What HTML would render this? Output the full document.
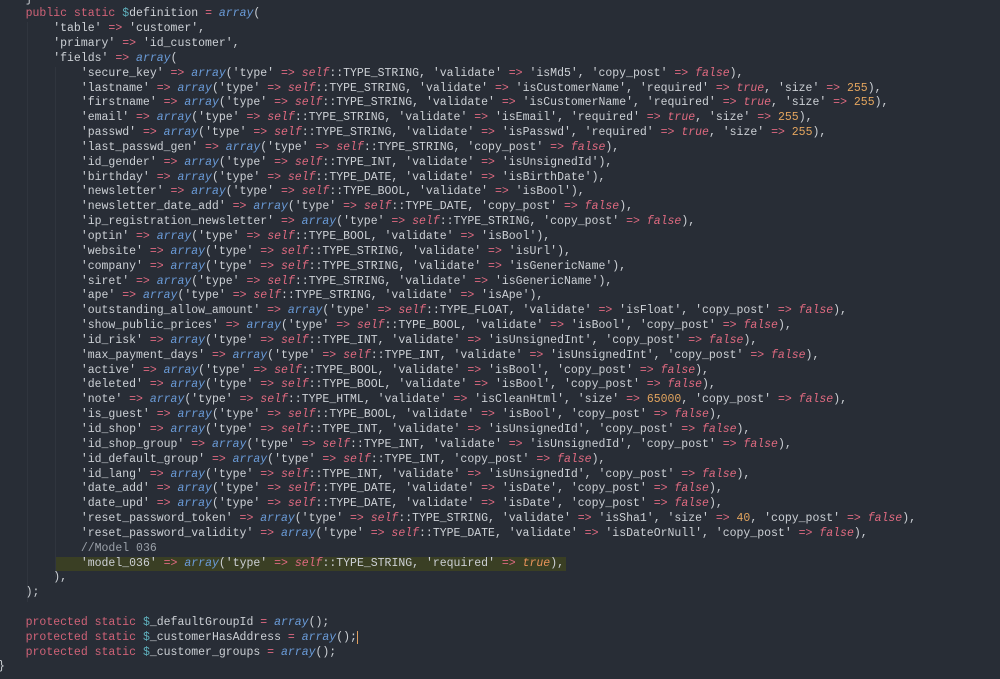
<!DOCTYPE html>
<html><head><meta charset="utf-8"><style>
html,body{margin:0;padding:0;background:#282d36;width:1000px;height:679px;overflow:hidden}
pre{position:absolute;left:-2px;top:-7.5px;margin:0;font-family:"Liberation Mono",monospace;font-size:11.5px;line-height:14.85px;color:#ccd0d5;white-space:pre}
b{font-weight:normal;color:#df6a80}
i{color:#6a9bd8;font-style:italic}
em{color:#df6a80;font-style:italic}
u{text-decoration:none;color:#e2a45e}
.k{color:#cf6277}
.d{color:#5fb0bd}
.c{color:#9aa0a8}
.hl{background:#3a3f24;display:inline-block;margin-left:-25px;padding-left:25px;padding-right:2px}
.t{color:#e8935a;font-style:italic}
.cur{border-right:1.5px solid #e0a060}
.g{position:absolute;top:0;width:1px;background:#30353e}
</style></head><body>
<div class="g" style="left:27px;top:22px;height:580px"></div>
<div class="g" style="left:55px;top:67px;height:510px"></div>
<pre>    }
    <span class="k">public static</span> <span class="d">$</span>definition <b>=</b> <i>array</i>(
        'table' <b>=&gt;</b> 'customer',
        'primary' <b>=&gt;</b> 'id_customer',
        'fields' <b>=&gt;</b> <i>array</i>(
            'secure_key' <b>=&gt;</b> <i>array</i>('type' <b>=&gt;</b> <em>self</em>::TYPE_STRING, 'validate' <b>=&gt;</b> 'isMd5', 'copy_post' <b>=&gt;</b> <em>false</em>),
            'lastname' <b>=&gt;</b> <i>array</i>('type' <b>=&gt;</b> <em>self</em>::TYPE_STRING, 'validate' <b>=&gt;</b> 'isCustomerName', 'required' <b>=&gt;</b> <em>true</em>, 'size' <b>=&gt;</b> <u>255</u>),
            'firstname' <b>=&gt;</b> <i>array</i>('type' <b>=&gt;</b> <em>self</em>::TYPE_STRING, 'validate' <b>=&gt;</b> 'isCustomerName', 'required' <b>=&gt;</b> <em>true</em>, 'size' <b>=&gt;</b> <u>255</u>),
            'email' <b>=&gt;</b> <i>array</i>('type' <b>=&gt;</b> <em>self</em>::TYPE_STRING, 'validate' <b>=&gt;</b> 'isEmail', 'required' <b>=&gt;</b> <em>true</em>, 'size' <b>=&gt;</b> <u>255</u>),
            'passwd' <b>=&gt;</b> <i>array</i>('type' <b>=&gt;</b> <em>self</em>::TYPE_STRING, 'validate' <b>=&gt;</b> 'isPasswd', 'required' <b>=&gt;</b> <em>true</em>, 'size' <b>=&gt;</b> <u>255</u>),
            'last_passwd_gen' <b>=&gt;</b> <i>array</i>('type' <b>=&gt;</b> <em>self</em>::TYPE_STRING, 'copy_post' <b>=&gt;</b> <em>false</em>),
            'id_gender' <b>=&gt;</b> <i>array</i>('type' <b>=&gt;</b> <em>self</em>::TYPE_INT, 'validate' <b>=&gt;</b> 'isUnsignedId'),
            'birthday' <b>=&gt;</b> <i>array</i>('type' <b>=&gt;</b> <em>self</em>::TYPE_DATE, 'validate' <b>=&gt;</b> 'isBirthDate'),
            'newsletter' <b>=&gt;</b> <i>array</i>('type' <b>=&gt;</b> <em>self</em>::TYPE_BOOL, 'validate' <b>=&gt;</b> 'isBool'),
            'newsletter_date_add' <b>=&gt;</b> <i>array</i>('type' <b>=&gt;</b> <em>self</em>::TYPE_DATE, 'copy_post' <b>=&gt;</b> <em>false</em>),
            'ip_registration_newsletter' <b>=&gt;</b> <i>array</i>('type' <b>=&gt;</b> <em>self</em>::TYPE_STRING, 'copy_post' <b>=&gt;</b> <em>false</em>),
            'optin' <b>=&gt;</b> <i>array</i>('type' <b>=&gt;</b> <em>self</em>::TYPE_BOOL, 'validate' <b>=&gt;</b> 'isBool'),
            'website' <b>=&gt;</b> <i>array</i>('type' <b>=&gt;</b> <em>self</em>::TYPE_STRING, 'validate' <b>=&gt;</b> 'isUrl'),
            'company' <b>=&gt;</b> <i>array</i>('type' <b>=&gt;</b> <em>self</em>::TYPE_STRING, 'validate' <b>=&gt;</b> 'isGenericName'),
            'siret' <b>=&gt;</b> <i>array</i>('type' <b>=&gt;</b> <em>self</em>::TYPE_STRING, 'validate' <b>=&gt;</b> 'isGenericName'),
            'ape' <b>=&gt;</b> <i>array</i>('type' <b>=&gt;</b> <em>self</em>::TYPE_STRING, 'validate' <b>=&gt;</b> 'isApe'),
            'outstanding_allow_amount' <b>=&gt;</b> <i>array</i>('type' <b>=&gt;</b> <em>self</em>::TYPE_FLOAT, 'validate' <b>=&gt;</b> 'isFloat', 'copy_post' <b>=&gt;</b> <em>false</em>),
            'show_public_prices' <b>=&gt;</b> <i>array</i>('type' <b>=&gt;</b> <em>self</em>::TYPE_BOOL, 'validate' <b>=&gt;</b> 'isBool', 'copy_post' <b>=&gt;</b> <em>false</em>),
            'id_risk' <b>=&gt;</b> <i>array</i>('type' <b>=&gt;</b> <em>self</em>::TYPE_INT, 'validate' <b>=&gt;</b> 'isUnsignedInt', 'copy_post' <b>=&gt;</b> <em>false</em>),
            'max_payment_days' <b>=&gt;</b> <i>array</i>('type' <b>=&gt;</b> <em>self</em>::TYPE_INT, 'validate' <b>=&gt;</b> 'isUnsignedInt', 'copy_post' <b>=&gt;</b> <em>false</em>),
            'active' <b>=&gt;</b> <i>array</i>('type' <b>=&gt;</b> <em>self</em>::TYPE_BOOL, 'validate' <b>=&gt;</b> 'isBool', 'copy_post' <b>=&gt;</b> <em>false</em>),
            'deleted' <b>=&gt;</b> <i>array</i>('type' <b>=&gt;</b> <em>self</em>::TYPE_BOOL, 'validate' <b>=&gt;</b> 'isBool', 'copy_post' <b>=&gt;</b> <em>false</em>),
            'note' <b>=&gt;</b> <i>array</i>('type' <b>=&gt;</b> <em>self</em>::TYPE_HTML, 'validate' <b>=&gt;</b> 'isCleanHtml', 'size' <b>=&gt;</b> <u>65000</u>, 'copy_post' <b>=&gt;</b> <em>false</em>),
            'is_guest' <b>=&gt;</b> <i>array</i>('type' <b>=&gt;</b> <em>self</em>::TYPE_BOOL, 'validate' <b>=&gt;</b> 'isBool', 'copy_post' <b>=&gt;</b> <em>false</em>),
            'id_shop' <b>=&gt;</b> <i>array</i>('type' <b>=&gt;</b> <em>self</em>::TYPE_INT, 'validate' <b>=&gt;</b> 'isUnsignedId', 'copy_post' <b>=&gt;</b> <em>false</em>),
            'id_shop_group' <b>=&gt;</b> <i>array</i>('type' <b>=&gt;</b> <em>self</em>::TYPE_INT, 'validate' <b>=&gt;</b> 'isUnsignedId', 'copy_post' <b>=&gt;</b> <em>false</em>),
            'id_default_group' <b>=&gt;</b> <i>array</i>('type' <b>=&gt;</b> <em>self</em>::TYPE_INT, 'copy_post' <b>=&gt;</b> <em>false</em>),
            'id_lang' <b>=&gt;</b> <i>array</i>('type' <b>=&gt;</b> <em>self</em>::TYPE_INT, 'validate' <b>=&gt;</b> 'isUnsignedId', 'copy_post' <b>=&gt;</b> <em>false</em>),
            'date_add' <b>=&gt;</b> <i>array</i>('type' <b>=&gt;</b> <em>self</em>::TYPE_DATE, 'validate' <b>=&gt;</b> 'isDate', 'copy_post' <b>=&gt;</b> <em>false</em>),
            'date_upd' <b>=&gt;</b> <i>array</i>('type' <b>=&gt;</b> <em>self</em>::TYPE_DATE, 'validate' <b>=&gt;</b> 'isDate', 'copy_post' <b>=&gt;</b> <em>false</em>),
            'reset_password_token' <b>=&gt;</b> <i>array</i>('type' <b>=&gt;</b> <em>self</em>::TYPE_STRING, 'validate' <b>=&gt;</b> 'isSha1', 'size' <b>=&gt;</b> <u>40</u>, 'copy_post' <b>=&gt;</b> <em>false</em>),
            'reset_password_validity' <b>=&gt;</b> <i>array</i>('type' <b>=&gt;</b> <em>self</em>::TYPE_DATE, 'validate' <b>=&gt;</b> 'isDateOrNull', 'copy_post' <b>=&gt;</b> <em>false</em>),
            <span class="c">//Model 036</span>
            <span class="hl">'model_036' <b>=&gt;</b> <i>array</i>('type' <b>=&gt;</b> <em>self</em>::TYPE_STRING, 'required' <b>=&gt;</b> <span class="t">true</span>),</span>
        ),
    );

    <span class="k">protected static</span> <span class="d">$</span>_defaultGroupId <b>=</b> <i>array</i>();
    <span class="k">protected static</span> <span class="d">$</span>_customerHasAddress <b>=</b> <i>array</i>();<span class="cur"></span>
    <span class="k">protected static</span> <span class="d">$</span>_customer_groups <b>=</b> <i>array</i>();
}</pre>
</body></html>
